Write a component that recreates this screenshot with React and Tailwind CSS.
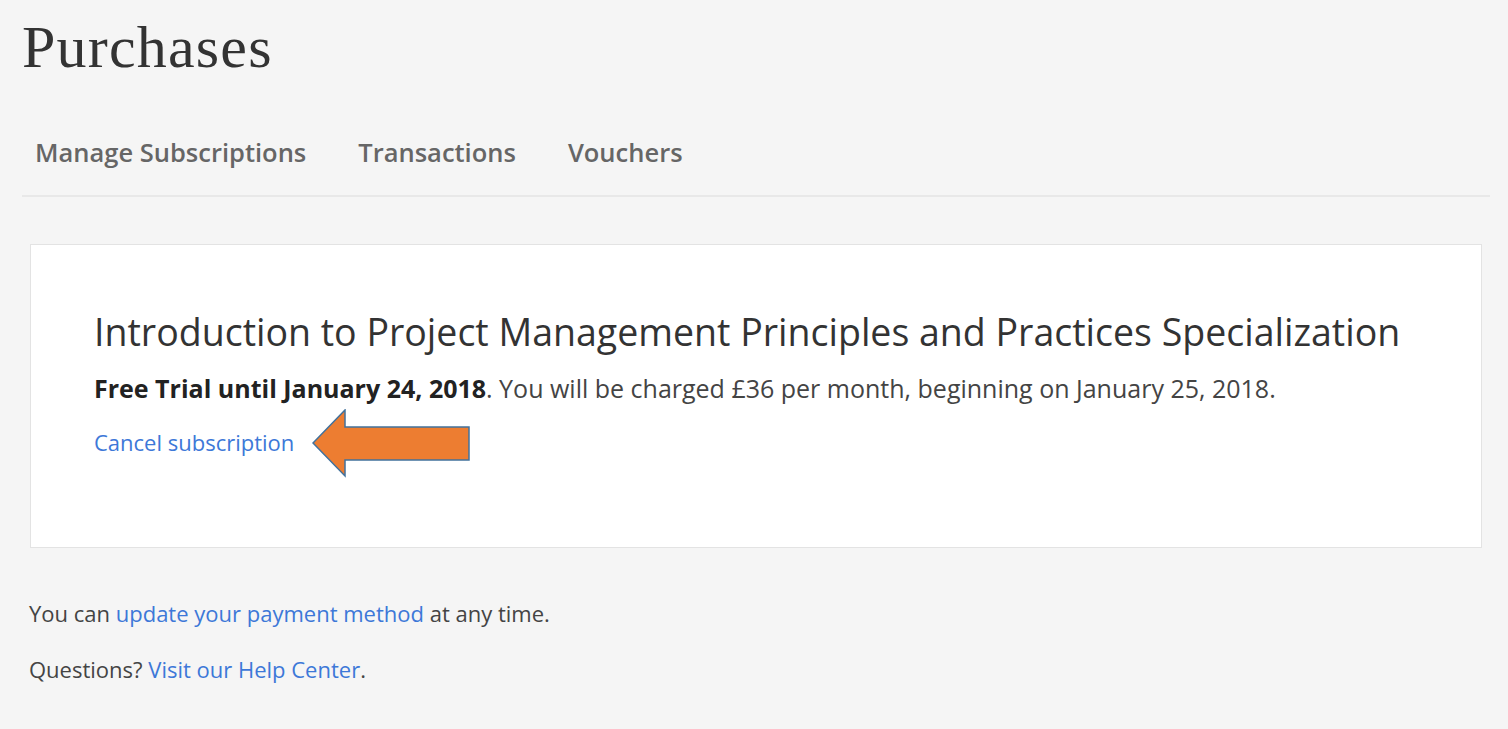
import React from 'react';

const tabs = ['Manage Subscriptions', 'Transactions', 'Vouchers'];

const Arrow = () => (
  <svg
    className="absolute left-[312px] top-[409px]"
    width="160"
    height="70"
    viewBox="312 409 160 70"
  >
    <polygon
      points="313,443 345,410 345,427 469,427 469,460 345,460 345,476"
      fill="#ed7d31"
      stroke="#41719c"
      strokeWidth="1.5"
    />
  </svg>
);

export default function App() {
  return (
    <div className="relative min-h-screen bg-[#f5f5f5] px-[22px] pr-[18px] font-['Open_Sans',sans-serif] overflow-hidden">
      {/* heading */}
      <h1 className="pt-[17px] text-[60px] leading-[60px] text-[#333] tracking-[1.2px] font-['Liberation_Serif',serif]">
        Purchases
      </h1>

      {/* tabs */}
      <div className="mt-[62px] pb-[30px] border-b-2 border-[#e8e8e8] flex gap-[52px] pl-[13px]">
        {tabs.map((t) => (
          <span key={t} className="text-[25.5px] leading-[26px] font-semibold text-[#666]">
            {t}
          </span>
        ))}
      </div>

      {/* subscription card */}
      <div className="mt-[47px] mx-[8px] bg-white border border-[#e3e3e3] pl-[63px] pt-[68px] pb-[91px]">
        <h2 className="text-[37.5px] leading-[38px] text-[#333]">
          Introduction to Project Management Principles and Practices Specialization
        </h2>
        <p className="mt-[25px] text-[25px] leading-[25px] text-[#444]">
          <span className="font-bold text-[#222]">Free Trial until January 24, 2018</span>. You will be charged £36 per month, beginning on January 25, 2018.
        </p>
        <div className="mt-[30px] leading-[22px]">
          <a className="text-[22px] leading-[22px] text-[#3d78d8]">Cancel subscription</a>
        </div>
      </div>

      <p className="mt-[54px] pl-[7px] text-[22px] leading-[22px] text-[#444]">
        You can <a className="text-[#3d78d8]">update your payment method</a> at any time.
      </p>
      <p className="mt-[34px] pl-[7px] text-[22px] leading-[22px] text-[#444]">
        Questions? <a className="text-[#3d78d8]">Visit our Help Center</a>.
      </p>

      <Arrow />
    </div>
  );
}
